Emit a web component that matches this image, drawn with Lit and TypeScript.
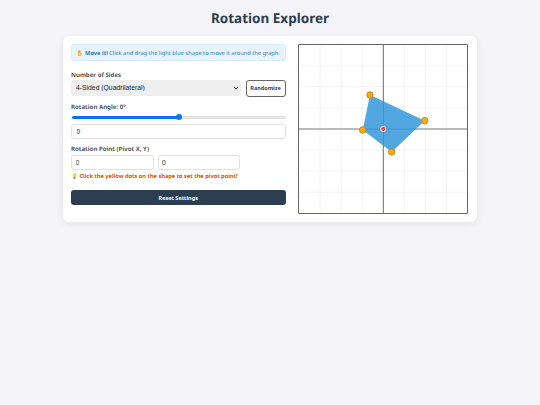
import { LitElement, html, css, svg } from "lit";
import { customElement } from "lit/decorators.js";

const S = 21.07;
const CX = 84.3;
const CY = 84;
const poly: [number, number][] = [[71, 50], [125.7, 75.7], [92.7, 107], [63.7, 85]];

@customElement("app-root")
export class AppRoot extends LitElement {
  static styles = css`
    :host { display: block; min-height: 405px; background: #f4f4f9; font-family: "Noto Sans", sans-serif; color: #2c3e50; box-sizing: border-box; padding: 8px 0 0; text-rendering: geometricPrecision; }
    * { box-sizing: border-box; }
    h1 { margin: 0 0 8px; height: 20px; line-height: 20px; text-align: center; font-size: 13.5px; font-weight: 700; color: #2c3e50; }
    .card { width: 414px; margin: 0 auto; background: #fff; border-radius: 6px; box-shadow: 0 2px 8px rgba(0,0,0,.08); padding: 8px; display: flex; justify-content: space-between; }
    .controls { width: 214.5px; flex: none; display: flex; flex-direction: column; }
    .tip { height: 17px; background: #e8f4fd; border: 1px solid #d9ecfa; border-radius: 3px; display: flex; align-items: center; padding: 0 4.5px; font-size: 5.7px; color: #2980b9; white-space: pre; margin-bottom: 8.5px; }
    label { display: block; font-size: 6.1px; font-weight: 700; color: #555; line-height: 9px; }
    .row { display: flex; justify-content: space-between; margin-top: 1px; }
    .selwrap { position: relative; display: block; width: 170px; height: 16.5px; }
    select { appearance: none; display: block; width: 170px; height: 16.5px; background: #efefef; border: 1px solid #eee; border-radius: 3px; font: 6.8px "Liberation Sans", sans-serif; color: #222; padding: 0 4px; }
    .chev { position: absolute; right: 2.5px; top: 6.5px; width: 6px; height: 4px; pointer-events: none; }
    .rand { width: 40px; height: 17px; flex: none; background: #fff; border: 1px solid #666; border-radius: 3px; font: 700 5.5px "Noto Sans", sans-serif; color: #444; padding: 0; }
    input[type=range] { appearance: none; display: block; width: 214.5px; margin: 1px 0 0 .5px; height: 10px; background: transparent; outline: none; }
    input[type=range]::-webkit-slider-runnable-track { height: 3px; border-radius: 2px; background: linear-gradient(to right, #0075ff 50%, #e9e9e9 50%); box-shadow: inset 0 0 0 .5px rgba(0,0,0,.08); }
    input[type=range]::-webkit-slider-thumb { appearance: none; width: 6px; height: 6px; margin-top: -1.5px; border-radius: 50%; background: #0075ff; border: none; }
    .num { display: block; height: 15px; border: 1px solid #e2e2e2; border-radius: 3px; padding: 0 4.5px; background: #fff; font: 6.8px "Liberation Sans", sans-serif; color: #333; outline: none; }
    .full { width: 100%; margin-top: 1.5px; }
    .pair { display: flex; gap: 4px; margin-top: 2px; }
    .pair .num { width: 82.5px; height: 14.5px; padding: 0 3.5px; }
    .hint { margin-top: 1.5px; line-height: 10px; font-size: 5.65px; font-weight: 700; color: #d35400; white-space: pre; }
    .reset { width: 100%; height: 15px; margin-top: 9px; background: #2c3e50; color: #fff; border: none; border-radius: 3px; font: 700 5.5px "Noto Sans", sans-serif; padding: 0; }
    .gap1 { margin-top: 5.5px; }
    .gap2 { margin-top: 5.5px; }
    .graph { width: 170px; height: 170px; flex: none; margin-right: 1px; border: 1px solid #666; border-radius: 1px; background: #fff; }
    .graph svg { display: block; width: 168px; height: 168px; }
  `;

  render() {
    const ticks = [-3, -2, -1, 1, 2, 3];
    const lines = ticks.map((i) => svg`
      <line x1=${CX + i * S} y1="0" x2=${CX + i * S} y2="168" stroke="#eeeeee" stroke-width=".7"/>
      <line x1="0" y1=${CY + i * S} x2="168" y2=${CY + i * S} stroke="#eeeeee" stroke-width=".7"/>`);
    return html`
      <h1>Rotation Explorer</h1>
      <div class="card">
        <div class="controls">
          <div class="tip"><span>✋ </span><b>Move it!</b> Click and drag the light blue shape to move it around the graph.</div>
          <label>Number of Sides</label>
          <div class="row">
            <span class="selwrap">
              <select><option>4-Sided (Quadrilateral)</option></select>
              <svg class="chev" viewBox="0 0 6 4"><path d="M1 1l2 2 2-2" fill="none" stroke="#222" stroke-width="1"/></svg>
            </span>
            <button class="rand">Randomize</button>
          </div>
          <label class="gap1">Rotation Angle: 0°</label>
          <input type="range" min="-180" max="180" value="0" />
          <input class="num full" type="text" value="0" />
          <label class="gap2">Rotation Point (Pivot X, Y)</label>
          <div class="pair">
            <input class="num" type="text" value="0" />
            <input class="num" type="text" value="0" />
          </div>
          <div class="hint">💡 Click the yellow dots on the shape to set the pivot point!</div>
          <button class="reset">Reset Settings</button>
        </div>
        <div class="graph">
          <svg viewBox="0 0 168 168">
            ${lines}
            <line x1=${CX} y1="0" x2=${CX} y2="168" stroke="#444" stroke-width=".8"/>
            <line x1="0" y1=${CY} x2="168" y2=${CY} stroke="#777" stroke-width="1"/>
            <polygon points=${poly.map((p) => p.join(",")).join(" ")} fill="#3498db" fill-opacity=".85"/>
            ${poly.map(([x, y]) => svg`<circle cx=${x} cy=${y} r="3.2" fill="#f5ab11" stroke="#c9820e" stroke-width=".9"/>`)}
            <circle cx=${CX} cy=${CY} r="2.6" fill="#e74c3c" stroke="#f4e4e4" stroke-width="1"/>
          </svg>
        </div>
      </div>
    `;
  }
}
